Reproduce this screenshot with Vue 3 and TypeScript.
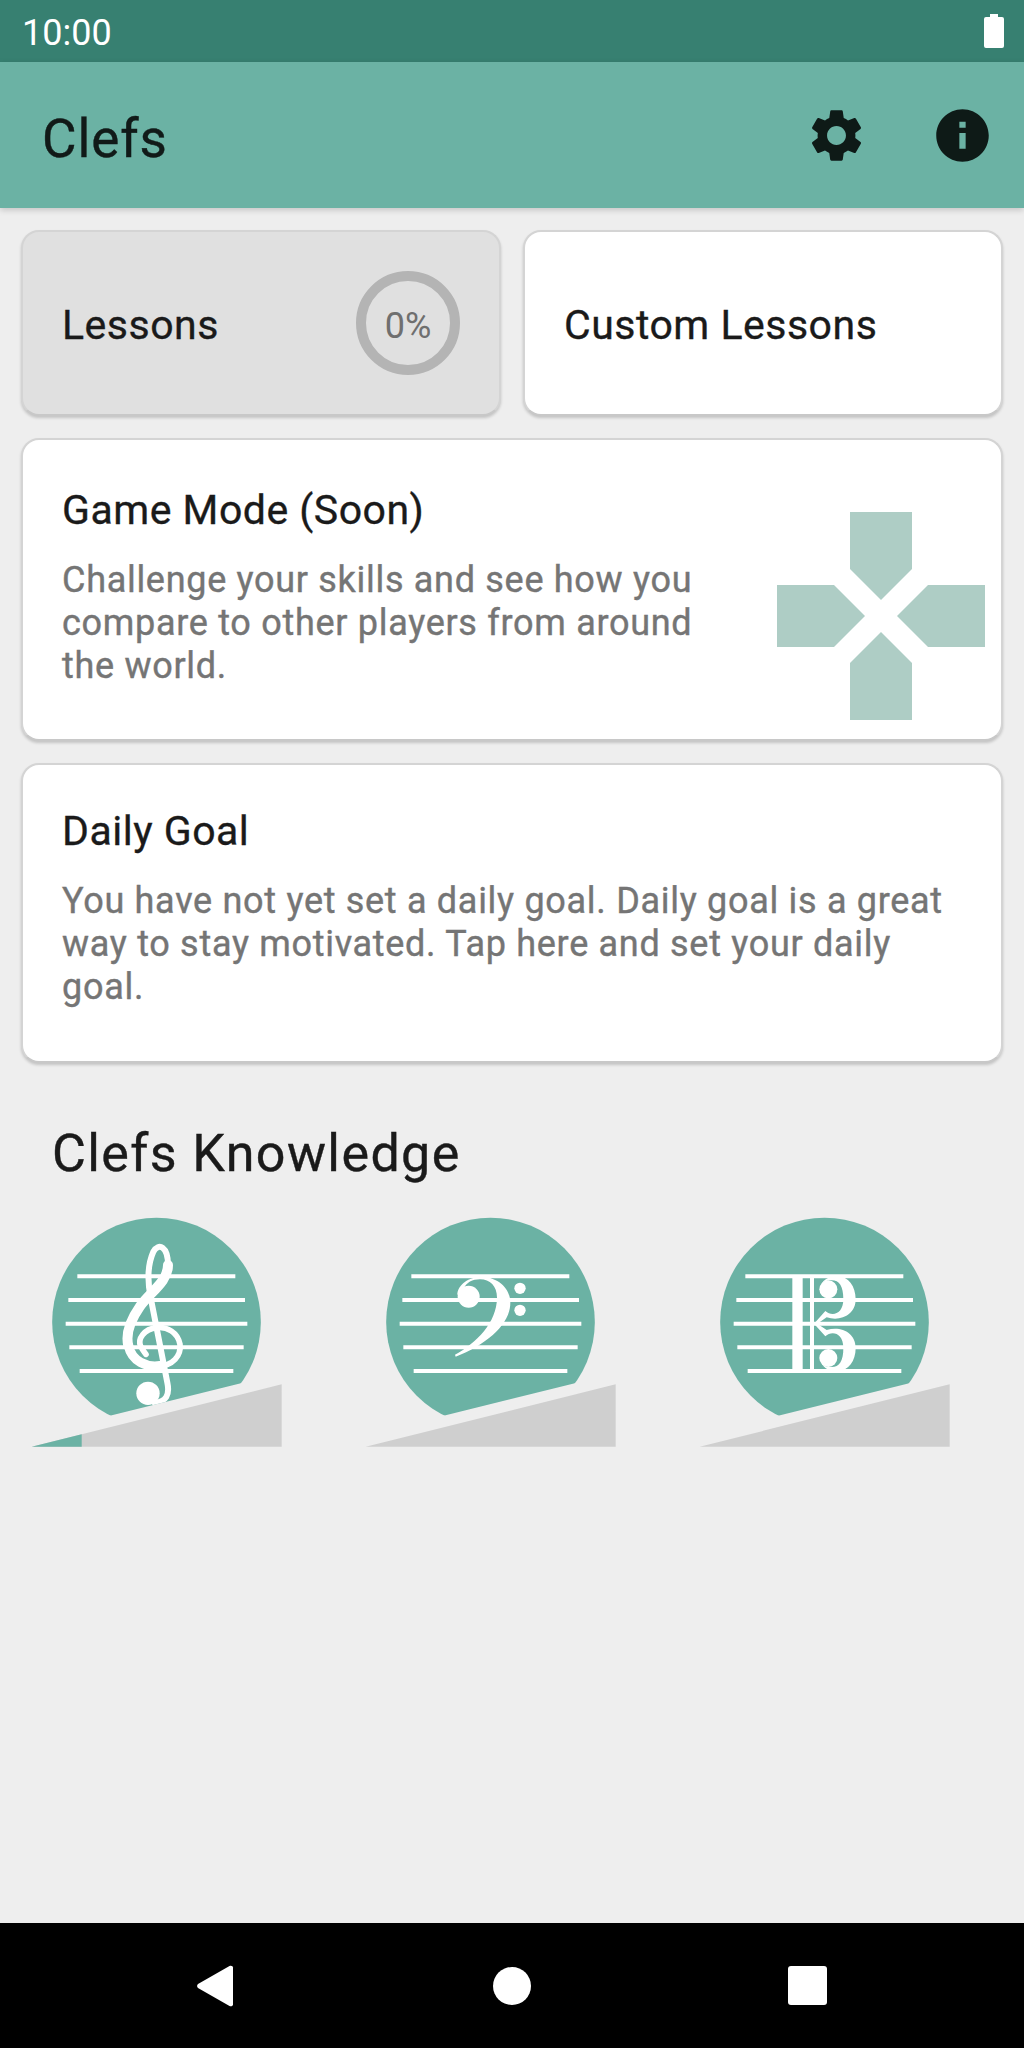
<script setup lang="ts">
const clefs = ['treble', 'bass', 'alto'] as const
const staff = [
  { y: 256, a: 232, b: 706 },
  { y: 327, a: 205, b: 735 },
  { y: 398, a: 197, b: 742 },
  { y: 469, a: 208, b: 731 },
  { y: 540, a: 239, b: 700 }
]
</script>

<template>
  <div class="phone">
    <div class="status">
      <span class="time">10:00</span>
      <svg class="battery" viewBox="0 0 20 34"><path d="M6 0h8v3h4a2 2 0 0 1 2 2v27a2 2 0 0 1-2 2H2a2 2 0 0 1-2-2V5a2 2 0 0 1 2-2h4z" fill="#fff" /></svg>
    </div>
    <header class="appbar">
      <h1 class="title">Clefs</h1>
      <div class="actions">
        <svg class="icon" viewBox="0 0 24 24"><path d="M19.14 12.94c.04-.3.06-.61.06-.94 0-.32-.02-.64-.07-.94l2.03-1.58c.18-.14.23-.41.12-.61l-1.92-3.32c-.12-.22-.37-.29-.59-.22l-2.39.96c-.5-.38-1.03-.7-1.62-.94l-.36-2.54c-.04-.24-.24-.41-.48-.41h-3.84c-.24 0-.43.17-.47.41l-.36 2.54c-.59.24-1.13.57-1.62.94l-2.39-.96c-.22-.08-.47 0-.59.22L2.74 8.87c-.12.21-.08.47.12.61l2.03 1.58c-.05.3-.09.63-.09.94s.02.64.07.94l-2.03 1.58c-.18.14-.23.41-.12.61l1.92 3.32c.12.22.37.29.59.22l2.39-.96c.5.38 1.03.7 1.62.94l.36 2.54c.05.24.24.41.48.41h3.84c.24 0 .44-.17.47-.41l.36-2.54c.59-.24 1.13-.56 1.62-.94l2.39.96c.22.08.47 0 .59-.22l1.92-3.32c.12-.22.07-.47-.12-.61l-2.01-1.58zM12 15.6c-1.98 0-3.6-1.62-3.6-3.6s1.62-3.6 3.6-3.6 3.6 1.62 3.6 3.6-1.62 3.6-3.6 3.6z" /></svg>
        <svg class="icon" viewBox="0 0 24 24"><path d="M12 2C6.48 2 2 6.48 2 12s4.48 10 10 10 10-4.48 10-10S17.52 2 12 2zm1.2 15h-2.4v-6h2.4v6zm0-8h-2.4V6.8h2.4V9z" /></svg>
      </div>
    </header>

    <main class="content">
      <div class="top-row">
        <div class="card small pressed">
          <span class="small-label">Lessons</span>
          <div class="ring"><span>0%</span></div>
        </div>
        <div class="card small">
          <span class="small-label">Custom Lessons</span>
        </div>
      </div>

      <div class="card game">
        <div class="game-text">
          <div class="card-title">Game Mode (Soon)</div>
          <p class="card-body">Challenge your skills and see how you compare to other players from around the world.</p>
        </div>
        <svg class="dpad" viewBox="0 0 208 208">
          <g fill="#aecdc5">
            <polygon points="73,0 135,0 135,57 104,88 73,57" />
            <polygon points="73,208 135,208 135,151 104,120 73,151" />
            <polygon points="0,73 57,73 88,104 57,135 0,135" />
            <polygon points="208,73 151,73 120,104 151,135 208,135" />
          </g>
        </svg>
      </div>

      <div class="card goal">
        <div class="card-title">Daily Goal</div>
        <p class="card-body">You have not yet set a daily goal. Daily goal is a great way to stay motivated. Tap here and set your daily goal.</p>
      </div>

      <h2 class="section">Clefs Knowledge</h2>

      <div class="clefs">
        <svg v-for="clef in clefs" :key="clef" class="clef" viewBox="0 30 1002 750">
          <defs>
            <clipPath :id="'cut-' + clef">
              <polygon points="0,0 1002,0 1002,507.6 0,756" />
            </clipPath>
          </defs>
          <g :clip-path="'url(#cut-' + clef + ')'">
            <circle cx="469.5" cy="393" r="313" fill="#6bb2a4" />
            <g stroke="#fff" stroke-width="12">
              <line v-for="l in staff" :key="l.y" :x1="l.a" :x2="l.b" :y1="l.y" :y2="l.y" />
            </g>
            <g v-if="clef === 'treble'">
              <g fill="none" stroke="#fff" stroke-linecap="round" stroke-linejoin="round">
                <path d="M504 222C504 272 452 302 420 346C388 392 376 428 385 464" stroke-width="30" />
                <path d="M385 464C396 512 440 530 480 524" stroke-width="28" />
                <path d="M504 222C504 166 476 154 460 182C444 218 442 270 452 320L502 575C510 612 498 632 464 636" stroke-width="18" />
                <path d="M470 526C520 526 544 492 540 460C534 424 500 406 470 410C432 414 412 444 422 466C428 478 434 484 438 490" stroke-width="17" />
              </g>
              <circle cx="444" cy="607" r="35" fill="#fff" />
            </g>
            <g v-else-if="clef === 'bass'" transform="translate(18 0)" fill="#fff">
              <path d="M352 312C352 280 390 256 425 257C480 260 511 295 511 335C511 400 440 460 347 497L345 491C410 455 470 395 471 320C471 285 450 265 420 265C398 265 378 275 372 292Z" />
              <circle cx="386" cy="317" r="33" />
              <circle cx="540" cy="292" r="17" />
              <circle cx="540" cy="358" r="17" />
            </g>
            <g v-else transform="translate(36 0)" fill="#fff">
              <rect x="337" y="256" width="31" height="284" />
              <rect x="390" y="256" width="12" height="284" />
              <g>
                <path d="M402 398L436 360C456 378 490 370 490 325C490 285 478 268 455 268C440 268 428 272 422 284C432 260 455 255 475 256C505 258 527 285 527 325C527 372 482 392 440 379L412 398Z" />
                <circle cx="445" cy="295" r="27" />
              </g>
              <g transform="translate(0 796) scale(1 -1)">
                <path d="M402 398L436 360C456 378 490 370 490 325C490 285 478 268 455 268C440 268 428 272 422 284C432 260 455 255 475 256C505 258 527 285 527 325C527 372 482 392 440 379L412 398Z" />
                <circle cx="445" cy="295" r="27" />
              </g>
            </g>
          </g>
          <polygon points="95,767 845,580 845,767" fill="#cfcfcf" />
          <polygon v-if="clef === 'treble'" points="95,767 245,730 245,767" fill="#6bb2a4" />
        </svg>
      </div>
    </main>

    <nav class="navbar">
      <svg class="nav-icon" viewBox="0 0 38 42"><path d="M33.500 1 2 19a2.600 2.600 0 0 0 0 4L33.500 41c1.500.8 3.500 0 3.500-1.500V2.500c0-1.500-2-2.300-3.500-1.500z" fill="#fff" /></svg>
      <span class="nav-home"></span>
      <span class="nav-square"></span>
    </nav>
  </div>
</template>

<style>
html, body { margin: 0; background: #eeeeee; }
</style>

<style scoped>
.phone {
  width: 1024px;
  height: 2048px;
  display: flex;
  flex-direction: column;
  background: #eeeeee;
  font-family: Roboto, "Noto Sans", sans-serif;
  overflow: hidden;
}
.status {
  height: 62px;
  flex: none;
  background: #378071;
  display: flex;
  align-items: center;
  justify-content: space-between;
  padding: 0 20px 0 22px;
  color: #fff;
}
.time { font-size: 36px; line-height: 66px; height: 62px; }
.battery { width: 20px; height: 34px; }
.appbar {
  height: 146px;
  flex: none;
  background: #6bb2a4;
  display: flex;
  align-items: center;
  justify-content: space-between;
  padding: 0 30px 0 42px;
  box-shadow: 0 2px 6px rgba(0, 0, 0, .18);
  position: relative;
}
.title {
  margin: 0;
  font-size: 53px;
  font-weight: 400;
  -webkit-text-stroke: .4px currentColor;
  letter-spacing: .9px;
  color: #111a18;
  line-height: 64px;
  padding-top: 8px;
}
.actions { display: flex; gap: 63px; align-items: center; margin-top: 0; }
.icon { width: 63px; height: 63px; fill: #0e1a17; display: block; }
.content {
  flex: 1;
  padding: 22px 21px 0;
  display: flex;
  flex-direction: column;
  gap: 22px;
}
.top-row {
  display: grid;
  grid-template-columns: 1fr 1fr;
  gap: 22px;
}
.card {
  box-sizing: border-box;
  background: #fff;
  border: 2px solid #d4d4d4;
  border-bottom-color: #c8c8c8;
  border-radius: 18px;
  box-shadow: 0 2px 3px rgba(0, 0, 0, .18);
}
.small {
  height: 186px;
  display: flex;
  align-items: center;
  justify-content: space-between;
  padding: 0 40px 0 39px;
}
.pressed { background: #e0e0e0; }
.small-label {
  font-size: 41px;
  font-weight: 400;
  -webkit-text-stroke: .35px currentColor;
  color: #1a1a1a;
  letter-spacing: .5px;
  position: relative;
  top: 2px;
}
.ring {
  width: 104px;
  height: 104px;
  box-sizing: border-box;
  border: 10px solid #b4b4b4;
  border-radius: 50%;
  display: flex;
  align-items: center;
  justify-content: center;
  font-size: 36px;
  color: #6f6f6f;
  font-weight: 400;
  position: relative;
  left: 1px;
}
.ring span { position: relative; top: 3px; }
.game {
  height: 303px;
  display: flex;
  align-items: flex-start;
  justify-content: space-between;
  padding: 48px 16px 0 39px;
}
.game-text { width: 670px; }
.dpad { width: 208px; height: 208px; margin-top: 24px; flex: none; }
.goal {
  height: 300px;
  padding: 44px 40px 0 39px;
}
.card-title {
  font-size: 41px;
  font-weight: 400;
  -webkit-text-stroke: .35px currentColor;
  color: #1a1a1a;
  letter-spacing: .5px;
  line-height: 44px;
}
.card-body {
  margin: 27px 0 0;
  font-size: 36px;
  font-weight: 400;
  -webkit-text-stroke: .4px currentColor;
  line-height: 43px;
  color: #757575;
  letter-spacing: .7px;
}
.section {
  margin: 36px 0 0 31px;
  font-size: 52px;
  font-weight: 400;
  -webkit-text-stroke: .4px currentColor;
  line-height: 66px;
  color: #1a1a1a;
  letter-spacing: 1.4px;
}
.clefs {
  display: flex;
  margin: -8px 0 0 -21px;
}
.clef { width: 334px; height: 250px; flex: none; display: block; }
.navbar {
  height: 125px;
  flex: none;
  background: #000;
  display: flex;
  justify-content: center;
  align-items: center;
  padding-right: 2px;
}
.nav-icon { width: 38px; height: 42px; }
.nav-home { width: 38px; height: 38px; margin: 0 257px 0 259px; border-radius: 50%; background: #fff; }
.nav-square { width: 39px; height: 39px; border-radius: 3px; background: #fff; }
</style>
